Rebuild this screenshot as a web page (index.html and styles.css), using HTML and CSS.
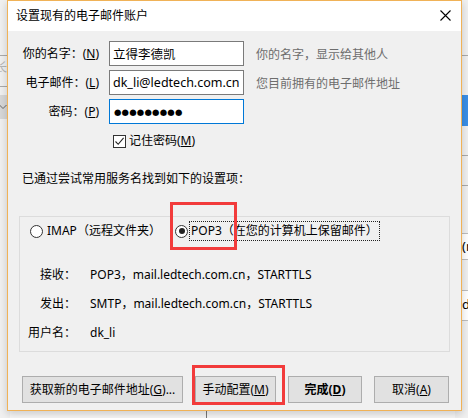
FILE: index.html
```html
<!DOCTYPE html>
<html lang="zh-CN">
<head>
<meta charset="utf-8">
<title>设置现有的电子邮件账户</title>
<link rel="stylesheet" href="styles.css">
</head>
<body>
<div class="desktop">
  <div class="bg-left">
    <div class="bl-line bl-line1"></div>
    <span class="bl-text">长</span>
    <div class="bl-line bl-line2"></div>
    <div class="bl-combo"><svg width="8" height="6" viewBox="0 0 8 6"><path d="M0.5 1 L4 4.5 L7.5 1" fill="none" stroke="#666" stroke-width="1"/></svg></div>
  </div>
  <div class="bg-right">
    <div class="br-line br-l1"></div>
    <div class="br-blue"></div>
    <div class="br-line br-l2"></div>
    <div class="br-line br-l3"></div>
    <div class="br-box br-box1"><span>(n</span></div>
    <div class="br-box br-box2"><span>d</span></div>
  </div>
  <div class="bg-bottom-line"></div>

  <div class="dialog">
    <div class="titlebar">
      <span class="title">设置现有的电子邮件账户</span>
      <svg class="close" width="11" height="11" viewBox="0 0 11 11"><path d="M0.5 0.5 L10.5 10.5 M10.5 0.5 L0.5 10.5" stroke="#000" stroke-width="1.1" fill="none"/></svg>
    </div>
    <div class="content">
      <div class="form">
        <label class="lbl">你的名字：(<u>N</u>)</label>
        <div class="field">立得李德凯</div>
        <span class="hint">你的名字，显示给其他人</span>

        <label class="lbl">电子邮件：(<u>L</u>)</label>
        <div class="field">dk_li@ledtech.com.cn</div>
        <span class="hint">您目前拥有的电子邮件地址</span>

        <label class="lbl">密码：(<u>P</u>)</label>
        <div class="field focused"><span class="dots">●●●●●●●●●</span></div>
        <span></span>

        <span></span>
        <div class="remember">
          <span class="checkbox"><svg width="11" height="11" viewBox="0 0 11 11"><path d="M1.5 5.5 L4.2 8.3 L9.6 1.8" fill="none" stroke="#222" stroke-width="1.1"/></svg></span>
          <span>记住密码(<u>M</u>)</span>
        </div>
        <span></span>
      </div>

      <p class="found">已通过尝试常用服务名找到如下的设置项：</p>

      <div class="group">
        <div class="radios">
          <div class="radio-item radio-imap">
            <span class="radio"></span>
            <span class="radio-text">IMAP（远程文件夹）</span>
          </div>
          <div class="radio-item">
            <span class="radio checked"></span>
            <span class="radio-text focus">POP3（在您的计算机上保留邮件）</span>
          </div>
        </div>
        <div class="info">
          <span class="info-lbl">接收：</span>
          <span>POP3，mail.ledtech.com.cn，STARTTLS</span>
          <span class="info-lbl">发出：</span>
          <span>SMTP，mail.ledtech.com.cn，STARTTLS</span>
          <span class="info-lbl">用户名：</span>
          <span>dk_li</span>
        </div>
      </div>

      <div class="buttons">
        <button class="btn btn-new">获取新的电子邮件地址(<u>G</u>)...</button>
        <button class="btn btn-manual">手动配置(<u>M</u>)</button>
        <button class="btn btn-done">完成(<u>D</u>)</button>
        <button class="btn btn-cancel">取消(<u>A</u>)</button>
      </div>
    </div>
    <div class="mark mark-pop"></div>
    <div class="mark mark-manual"></div>
  </div>
</div>
</body>
</html>
```

FILE: styles.css
```css
* { box-sizing: border-box; }
html, body {
  margin: 0;
  padding: 0;
}
body {
  width: 468px;
  height: 418px;
  overflow: hidden;
  background: #f7f7f7;
  font-family: "Noto Sans", "Noto Sans CJK SC", sans-serif;
  font-size: 12px;
  color: #000;
}
.desktop {
  position: relative;
  width: 468px;
  height: 418px;
  overflow: hidden;
}

/* background window fragments */
.bg-left {
  position: absolute;
  left: 0; top: 0;
  width: 10px; height: 418px;
  background: #f0f0f0;
}
.bl-line {
  position: absolute;
  left: 0; width: 10px; height: 1px;
  background: #a9a9a9;
}
.bl-line1 { top: 55px; }
.bl-line2 { top: 86px; }
.bl-text {
  position: absolute;
  left: -5px; top: 60px;
  color: #b5b5b5;
  font-size: 12px;
  line-height: 16px;
}
.bl-combo {
  position: absolute;
  left: 0; top: 95px;
  width: 10px; height: 24px;
  background: #d7d7d7;
  display: flex;
  align-items: center;
}
.bl-combo svg { margin-left: -1px; }

.bg-right {
  position: absolute;
  left: 455px; top: 0;
  width: 13px; height: 418px;
  background: #f0f0f0;
}
.br-line {
  position: absolute;
  left: 0; width: 13px; height: 1px;
  background: #a9a9a9;
}
.br-l1 { top: 55px; }
.br-l2 { top: 155px; }
.br-l3 { top: 185px; }
.br-blue {
  position: absolute;
  left: 0; top: 95px;
  width: 13px; height: 31px;
  background: #3a8ee6;
}
.br-box {
  position: absolute;
  left: 0; width: 20px;
  border-top: 1px solid #bdbdbd;
  border-bottom: 1px solid #bdbdbd;
  background: #fff;
  line-height: 16px;
  font-size: 13px;
  padding-left: 7px;
}
.br-box1 { top: 233px; height: 27px; padding-top: 4px; }
.br-box2 { top: 290px; height: 31px; padding-top: 5px; }

.bg-bottom-line {
  position: absolute;
  left: 206px; top: 405px;
  width: 1px; height: 13px;
  background: #777;
}

/* dialog */
.dialog {
  position: absolute;
  left: 7px; top: 0;
  width: 455px;
  height: 411px;
  border: 1px solid #f0b257;
  background: #f0f0f0;
  box-shadow: 0 3px 8px rgba(0,0,0,0.18);
  display: flex;
  flex-direction: column;
}
.titlebar {
  height: 30px;
  background: #fff;
  display: flex;
  align-items: center;
  justify-content: space-between;
  padding: 0 10px 0 8px;
}
.title { line-height: 16px; }
.close { display: block; margin-top: -2px; }

.content {
  flex: 1;
  padding-top: 10px;
}
.form {
  display: grid;
  grid-template-columns: 91px 135px auto;
  column-gap: 10px;
  grid-template-rows: 25px 25px 25px auto;
  row-gap: 4px;
  align-items: center;
}
.form .hint { margin-left: 2px; color: #6d6d6d; }
.lbl { text-align: right; line-height: 16px; }
.field {
  height: 25px;
  border: 1px solid #7a7a7a;
  background: #fff;
  padding: 0 3px;
  display: flex;
  align-items: center;
  white-space: nowrap;
  overflow: hidden;
  font-size: 12.5px;
}
.field.focused { border-color: #0078d7; }
.dots {
  font-family: "DejaVu Sans", sans-serif;
  font-size: 8.5px;
  letter-spacing: 0.2px;
  padding-left: 1px;
}
.remember {
  margin-top: 5px;
  height: 16px;
  display: flex;
  align-items: center;
  gap: 3px;
  padding-left: 4px;
  line-height: 16px;
}
.checkbox {
  width: 13px; height: 13px;
  border: 1px solid #333;
  background: #fff;
  display: flex;
  align-items: center;
  justify-content: center;
}
.checkbox svg { display: block; }

.found {
  margin: 22px 0 0 14px;
  line-height: 16px;
}

.group {
  margin: 29px 11px 0 11px;
  border: 1px solid #dcdcdc;
  padding: 4px 0 10px 10px;
}
.radios {
  display: flex;
  align-items: center;
  height: 20px;
}
.radio-item {
  display: flex;
  align-items: center;
  gap: 3px;
}
.radio-imap { width: 145px; flex: none; }
.radio {
  width: 13px; height: 13px;
  flex: none;
  border-radius: 50%;
  border: 1px solid #333;
  background: #fff;
  position: relative;
}
.radio.checked::after {
  content: "";
  position: absolute;
  left: 2.5px; top: 2.5px;
  width: 6px; height: 6px;
  border-radius: 50%;
  background: #222;
}
.radio-text { line-height: 16px; padding: 1px 1px; white-space: nowrap; }
.radio-text.focus {
  outline: 1px dotted #222;
  outline-offset: 0;
  margin-left: -1px;
}
.info {
  margin: 26px 0 0 -10px;
  display: grid;
  grid-template-columns: 56px auto;
  column-gap: 14px;
  grid-auto-rows: 16px;
  row-gap: 13px;
  line-height: 16px;
}
.info-lbl { text-align: right; }

.buttons {
  margin: 24px 0 0 14px;
  display: flex;
  gap: 12px;
}
.btn {
  height: 27px;
  border: 1px solid #adadad;
  background: #e1e1e1;
  font-family: inherit;
  font-size: 12px;
  color: #000;
  padding: 0;
  line-height: 16px;
}
.btn-new { width: 161px; }
.btn-manual { width: 81px; }
.btn-done { width: 74px; font-weight: bold; }
.btn-cancel { width: 75px; }

.mark {
  position: absolute;
  border: 3px solid #f23b3b;
}
.mark-pop { left: 162px; top: 201px; width: 67px; height: 48px; }
.mark-manual { left: 184px; top: 364px; width: 93px; height: 40px; }
```
